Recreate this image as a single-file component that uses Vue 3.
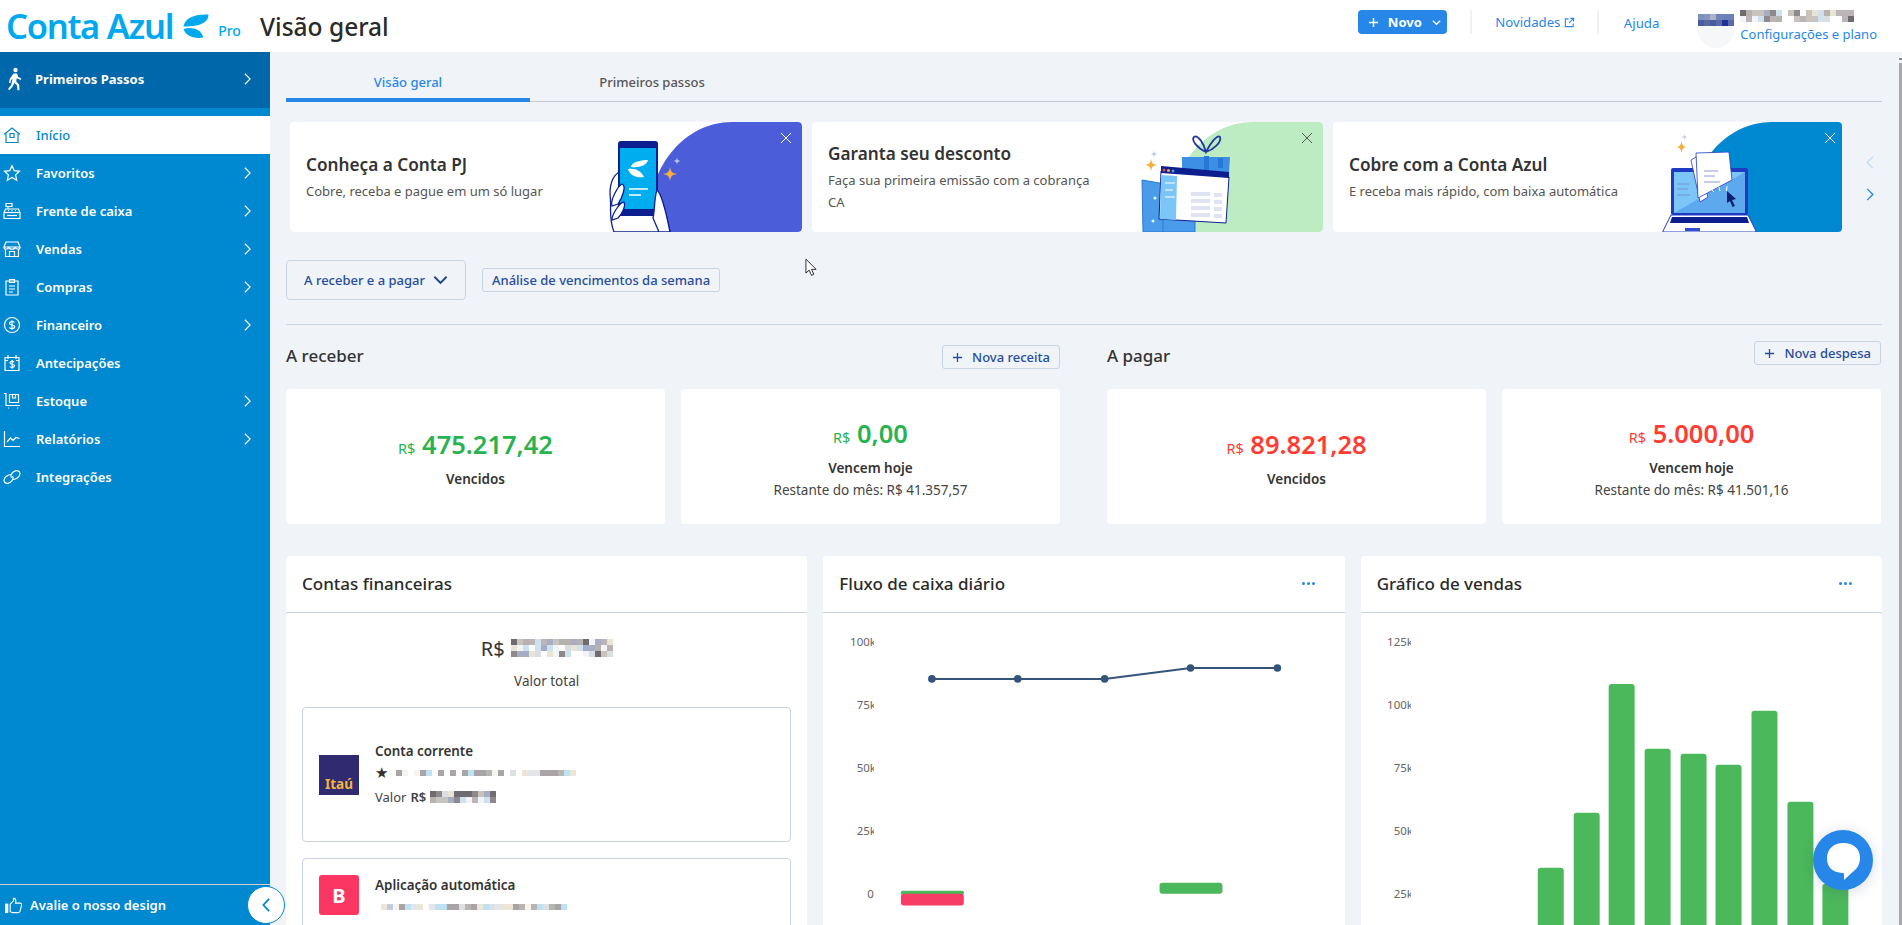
<template>
  <div class="app">
    <header class="topbar">
      <div class="brand">
        <span class="brand-name">Conta Azul</span>
        <svg class="brand-mark" viewBox="0 0 25 25">
          <path d="M0 12.5C1 5 9 0 25 .5 25 8 18 12.5 0 12.5Z" />
          <path d="M0 15C9 12.5 17 15 20 23.5 10 25 2 22 0 15Z" />
        </svg>
        <span class="brand-plan">Pro</span>
      </div>
      <h1 class="page-title">Visão geral</h1>

      <div class="top-actions">
        <button class="new-btn">
          <svg viewBox="0 0 12 12" class="new-plus"><path d="M6 1v10M1 6h10" /></svg>
          Novo
          <svg viewBox="0 0 12 12" class="new-caret"><path d="M2 4l4 4 4-4" /></svg>
        </button>
        <span class="top-sep first"></span>
        <a class="top-link">Novidades
          <svg viewBox="0 0 12 12" class="ext-icon"><path d="M5 2H1.5v8.5H10V7M7 1.5h3.5V5M10.5 1.5l-5 5" /></svg>
        </a>
        <span class="top-sep"></span>
        <a class="top-link help">Ajuda</a>
        <div class="avatar">
          <span class="mosaic" :style="gridStyle(6, 6)">
            <i v-for="(c, i) in avatarCells" :key="i" :style="{ background: c }"></i>
          </span>
        </div>
        <div class="account">
          <div class="account-name">
            <span class="mosaic" :style="gridStyle(7, 6)">
              <i v-for="(c, i) in nameA" :key="i" :style="{ background: c }"></i>
            </span>
            <span class="mosaic" :style="gridStyle(11, 6)">
              <i v-for="(c, i) in nameB" :key="i" :style="{ background: c }"></i>
            </span>
          </div>
          <a class="account-link">Configurações e plano</a>
        </div>
      </div>
    </header>

    <div class="shell">
      <aside class="sidebar">
        <div class="first-steps">
          <svg viewBox="0 0 16 24" class="walker">
            <circle cx="8.5" cy="3" r="2.2" />
            <path d="M6.5 6.5h3.5l1.3 3.5 3 1.5-.7 1.5-3.8-1.7-.6 3 3 3.5.3 5.500h-2l-.5-4.800-2.600-2.500-1.400 3-3.500 4.300-1.500-1.200 3.200-4.200 1.300-5.800-1.500.9-.5 3H2l.8-4.300Z" />
          </svg>
          <span>Primeiros Passos</span>
          <svg viewBox="0 0 10 16" class="chev"><path d="M2 2l6 6-6 6" /></svg>
        </div>

        <nav class="nav">
          <a v-for="item in navItems" :key="item.label" class="nav-item" :class="{ active: item.active }">
            <svg viewBox="0 0 18 18" class="nav-icon">
              <path v-for="(d, i) in item.icon" :key="i" :d="d" />
            </svg>
            <span class="nav-label">{{ item.label }}</span>
            <svg v-if="item.more" viewBox="0 0 10 16" class="chev"><path d="M2 2l6 6-6 6" /></svg>
          </a>
        </nav>

        <div class="side-footer">
          <svg viewBox="0 0 18 18" class="thumb">
            <path class="thumb-fill" d="M0 7h3.5v10H0Z" />
            <path d="M5.5 7.5 9 4V1.5c2-.5 3 1.5 2.2 5H16c1.2 0 1.8 1 1.5 2l-1.5 6.5c-.3 1-1 1.5-2 1.5H8c-1 0-1.8-.4-2.5-1Z" />
          </svg>
          <span>Avalie o nosso design</span>
        </div>
        <button class="collapse-btn">
          <svg viewBox="0 0 12 18"><path d="M9 2 2.5 9 9 16" /></svg>
        </button>
      </aside>

      <main class="main">
        <div class="tabs">
          <a class="tab active">Visão geral</a>
          <a class="tab">Primeiros passos</a>
        </div>

        <section class="promo-row">
          <article class="promo">
            <div class="promo-text">
              <h3>Conheça a Conta PJ</h3>
              <p>Cobre, receba e pague em um só lugar</p>
            </div>
            <svg class="promo-art" viewBox="0 0 250 110">
              <path fill="#4b5dd8" d="M100 110C88 60 125 0 180 0H246a4 4 0 0 1 4 4V106a4 4 0 0 1-4 4Z" />
              <path fill="#fff" stroke="#0d1f8f" stroke-width="1.3" d="M62 110C56 95 60 85 58 72 58 60 62 52 68 50L106 90 104 68C110 72 115 95 118 110Z" />
              <rect x="66" y="19" width="40" height="75" rx="3" fill="#0d1f8f" />
              <rect x="68" y="26" width="36" height="61" fill="#00aeef" />
              <path fill="#fff" d="M79 45C80 40 88 38 96 38 95 43 88 46 79 45ZM76 47C84 46 89 49 92 55 85 56 78 54 76 47Z" />
              <path stroke="#fff" stroke-width="1.3" d="M77 67H96M77 73H89" />
              <path fill="#fff" stroke="#0d1f8f" stroke-width="1.3" d="M101 96C103 88 102 76 105 68 110 72 115 95 118 110H107Z" />
              <path fill="#fff" stroke="#0d1f8f" stroke-width="1.3" d="M60 84C58 78 66 64 70 62 75 64 70 76 66 82ZM60 98C60 92 68 80 72 80 74 84 70 92 66 96Z" />
              <path fill="#f6ae3f" d="M118 45C119 50 120 51 125 52 120 53 119 54 118 59 117 54 116 53 111 52 116 51 117 50 118 45Z" />
              <path fill="#b9c6ef" d="M125 35.5C125.5 38 126 38.5 128.5 39 126 39.5 125.5 40 125 42.5 124.5 40 124 39.5 121.5 39 124 38.5 124.5 38 125 35.5Z" />
              <path stroke="#fff" stroke-width="1" d="M229 11 239 21M239 11 229 21" />
            </svg>
          </article>

          <article class="promo">
            <div class="promo-text">
              <h3>Garanta seu desconto</h3>
              <p>Faça sua primeira emissão com a cobrança CA</p>
            </div>
            <svg class="promo-art" viewBox="0 0 250 110">
              <path fill="#bdecc2" d="M100 110C88 60 125 0 180 0H246a4 4 0 0 1 4 4V106a4 4 0 0 1-4 4Z" />
              <path fill="#3d8fe6" d="M109 35H157L154 80H109Z" />
              <path fill="#2678d8" d="M131 34h5v16h-5ZM145 36h5v10h-5Z" />
              <path fill="none" stroke="#24399e" stroke-width="1.8" d="M133 30C124 26 118 18 121 15 125 12 131 22 133 30 137 22 144 12 147 15 149 20 140 28 133 30Z" />
              <path fill="#4a9cea" stroke="#2678d8" d="M69 58 92 62V110H70Z" />
              <path fill="#4a9cea" stroke="#2678d8" d="M90 75H122V110H90Z" />
              <circle cx="82" cy="76" r="1.5" fill="#dff" />
              <circle cx="80" cy="99" r="1.5" fill="#dff" />
              <circle cx="110" cy="97" r="1.5" fill="#dff" />
              <path fill="#fff" stroke="#0d1f8f" d="M88 49 156 55 153 101 86 97Z" />
              <path fill="#0d1f8f" d="M88 44 156 50V56L88 51Z" />
              <path fill="#7cc6f7" d="M88 53 104 54 103 98 87 97Z" />
              <path fill="#dfe3f2" d="M118 70H137V74H118ZM118 77H137V81H118ZM118 84H137V88H118ZM118 91H137V95H118ZM141 71H149V75H141ZM141 78H149V82H141ZM141 85H149V89H141ZM141 92H149V96H141Z" />
              <path stroke="#fff" stroke-width="1" d="M92 61H102M92 68H100M92 75H102" />
              <circle cx="91" cy="48" r="1.5" fill="#e84a3c" />
              <circle cx="95.5" cy="48.5" r="1.5" fill="#f6ae3f" />
              <circle cx="100" cy="49" r="1.5" fill="#4a9cea" />
              <path fill="#f6ae3f" d="M78 37C78.8 41 79.5 42 83.5 43 79.5 44 78.8 45 78 49 77.2 45 76.5 44 72.5 43 76.5 42 77.2 41 78 37Z" />
              <path fill="#bcc6e8" d="M81 28.5C81.3 31 81.8 31.5 84 32 81.8 32.5 81.3 33 81 35.5 80.7 33 80.2 32.5 78 32 80.2 31.5 80.7 31 81 28.5Z" />
              <path stroke="#5a5a5a" stroke-width="1" d="M229 11 239 21M239 11 229 21" />
            </svg>
          </article>

          <article class="promo">
            <div class="promo-text">
              <h3>Cobre com a Conta Azul</h3>
              <p>E receba mais rápido, com baixa automática</p>
            </div>
            <svg class="promo-art" viewBox="0 0 250 110">
              <path fill="#0088d0" d="M100 110C88 60 125 0 180 0H250V110Z" />
              <rect x="79" y="46" width="77" height="47" rx="2" fill="#1f3bc4" />
              <rect x="82" y="50" width="71" height="41" fill="#7cc6f7" />
              <path fill="#5ea8ee" d="M153 50V91H82Z" />
              <path fill="#fff" stroke="#1f3bc4" stroke-width=".8" d="M99 38 104 35 116 75 108 80Z" />
              <path fill="#fff" stroke="#1f3bc4" stroke-width=".8" d="M104 31 137 30 140 58 106 76Z" />
              <path stroke="#8c9ad8" stroke-width="1" d="M112 49H126M112 54H123M112 60H128" />
              <path stroke="#7b8fd6" stroke-width="1" d="M85 62H97M85 67H96M85 73H98" />
              <path stroke="#fff" stroke-width="1" d="M127 65 128 69M135 64 134.5 69M119 67 122 70" />
              <path fill="#0d1f6f" d="M135 69 144 77 140 78 143 84 140.5 85 138 79 135 81Z" />
              <path fill="#fff" stroke="#1f3bc4" d="M79 93H156L164 109V110H71V109Z" />
              <path fill="#0d1f8f" d="M80 95H155L157 101H78Z" />
              <path fill="#1f3bc4" d="M93 106H108V109H93Z" opacity=".9" />
              <path fill="#f6ae3f" d="M89.5 19C90.3 23 90.8 24 94 25 90.8 26 90.3 27 89.5 31 88.7 27 88.2 26 85 25 88.2 24 88.7 23 89.5 19Z" />
              <path fill="#c3cbec" d="M92.5 12C92.8 14 93.2 14.5 95 15 93.2 15.5 92.8 16 92.5 18 92.2 16 91.8 15.5 90 15 91.8 14.5 92.2 14 92.5 12Z" />
              <path stroke="#fff" stroke-width="1" d="M233 11 243 21M243 11 233 21" />
            </svg>
          </article>

          <div class="promo-arrows">
            <svg viewBox="0 0 10 16" class="arrow off"><path d="M8 2 2 8l6 6" /></svg>
            <svg viewBox="0 0 10 16" class="arrow"><path d="M2 2l6 6-6 6" /></svg>
          </div>
        </section>

        <div class="filter-row">
          <button class="select-btn">
            A receber e a pagar
            <svg viewBox="0 0 16 10"><path d="M1.5 1.5 8 8l6.5-6.5" /></svg>
          </button>
          <button class="tag-btn">Análise de vencimentos da semana</button>
        </div>

        <div class="split">
          <section v-for="group in moneyGroups" :key="group.title" class="money" :class="group.tone">
            <div class="money-head">
              <h2>{{ group.title }}</h2>
              <button class="add-btn">
                <svg viewBox="0 0 12 12"><path d="M6 1v10M1 6h10" /></svg>
                {{ group.action }}
              </button>
            </div>
            <div class="money-cards">
              <div v-for="card in group.cards" :key="card.label" class="money-card">
                <div class="amount"><small>R$</small> {{ card.value }}</div>
                <div class="amount-label">{{ card.label }}</div>
                <div v-if="card.rest" class="amount-rest">Restante do mês: R$ {{ card.rest }}</div>
              </div>
            </div>
          </section>
        </div>

        <div class="panels">
          <section class="panel">
            <div class="panel-head"><h3>Contas financeiras</h3></div>
            <div class="accounts-body">
              <div class="total">
                <span>R$</span>
                <span class="mosaic" :style="gridStyle(17, 6)">
                  <i v-for="(c, i) in totalCells" :key="i" :style="{ background: c }"></i>
                </span>
              </div>
              <div class="total-label">Valor total</div>

              <div class="bank-box">
                <div class="bank-logo itau">Itaú</div>
                <div class="bank-info">
                  <div class="bank-name">Conta corrente</div>
                  <div class="bank-line">
                    <span class="bank-star">★</span>
                    <span class="mosaic" :style="gridStyle(30, 6)">
                      <i v-for="(c, i) in lineA" :key="i" :style="{ background: c }"></i>
                    </span>
                  </div>
                  <div class="bank-value">
                    Valor <b>R$</b>
                    <span class="mosaic" :style="gridStyle(11, 6)">
                      <i v-for="(c, i) in valueCells" :key="i" :style="{ background: c }"></i>
                    </span>
                  </div>
                </div>
              </div>

              <div class="bank-box second">
                <div class="bank-logo inter">B</div>
                <div class="bank-info">
                  <div class="bank-name">Aplicação automática</div>
                  <div class="bank-line">
                    <span class="mosaic" :style="gridStyle(32, 6)">
                      <i v-for="(c, i) in lineB" :key="i" :style="{ background: c }"></i>
                    </span>
                  </div>
                </div>
              </div>
            </div>
          </section>

          <section class="panel">
            <div class="panel-head">
              <h3>Fluxo de caixa diário</h3>
              <span class="dots"><i></i><i></i><i></i></span>
            </div>
            <svg class="chart" viewBox="0 0 522 312">
              <defs>
                <clipPath id="flow-axis"><rect x="0" y="0" width="51" height="312" /></clipPath>
              </defs>
              <g clip-path="url(#flow-axis)" class="axis">
                <text v-for="t in flowTicks" :key="t.label" :x="t.x" :y="t.y">{{ t.label }}</text>
              </g>
              <polyline :points="flowLine" fill="none" stroke="#34547a" stroke-width="2" />
              <circle v-for="p in flowPoints" :key="p[0]" :cx="p[0]" :cy="p[1]" r="3.8" fill="#34547a" />
              <rect x="78" y="277" width="63" height="4" rx="1.5" fill="#4bb85c" />
              <rect x="78" y="280" width="63" height="12" rx="3" fill="#f73d65" />
              <rect x="337" y="269" width="63" height="11" rx="3" fill="#4bb85c" />
            </svg>
          </section>

          <section class="panel">
            <div class="panel-head">
              <h3>Gráfico de vendas</h3>
              <span class="dots"><i></i><i></i><i></i></span>
            </div>
            <svg class="chart" viewBox="0 0 522 312">
              <defs>
                <clipPath id="sales-axis"><rect x="0" y="0" width="50" height="312" /></clipPath>
              </defs>
              <g clip-path="url(#sales-axis)" class="axis">
                <text v-for="t in salesTicks" :key="t.label" x="52" :y="t.y">{{ t.label }}</text>
              </g>
              <rect v-for="b in salesBars" :key="b[0]" :x="b[0]" :y="b[1]" width="26" :height="330 - b[1]" rx="3" fill="#4bb85c" />
            </svg>
          </section>
        </div>
      </main>

      <div class="scroll-track">
        <span class="scroll-arrow"></span>
        <span class="scroll-thumb"></span>
      </div>
    </div>

    <svg class="mouse" viewBox="0 0 14 20">
      <path d="M1 1V16L4.5 12.8 7 18.5 9.5 17.3 7 12H12Z" fill="#fff" stroke="#222" stroke-width="1" />
    </svg>

    <button class="chat-btn">
      <svg viewBox="0 0 36 40">
        <path d="M18 1C8 1 1 7 1 17 1 26 7 31 15 31.5L18.5 32V39L27 31C32 28 35 23 35 16 35 7 28 1 18 1Z" fill="#fff" />
      </svg>
    </button>
  </div>
</template>

<script setup>
const navItems = [
  { label: 'Início', active: true, icon: ['M1 8.5 9 2l8 6.5', 'M3 7.5V16.5H15V7.5', 'M7 7.5H11V11.5H7Z'] },
  { label: 'Favoritos', more: true, icon: ['M9 1.8 11.2 6.6 16.5 7.3 12.6 10.9 13.7 16.2 9 13.5 4.3 16.2 5.4 10.9 1.5 7.3 6.8 6.6Z'] },
  { label: 'Frente de caixa', more: true, icon: ['M3 1.5H9V4.5H3Z', 'M2.5 7H15.5L17 10.5V16.5H1V10.5Z', 'M1 10.5H17', 'M5 4.5V7', 'M5 8.7H6M8.5 8.7H9.5M12 8.7H13', 'M4 13.5H14'] },
  { label: 'Vendas', more: true, icon: ['M3 2H15L17 7H1Z', 'M1 7C1 10 5 10 5.7 7 6.4 10 11.6 10 12.3 7 13 10 17 10 17 7', 'M2.5 9.5V16.5H15.5V9.5', 'M6.5 16.5V11.5H11.5V16.5'] },
  { label: 'Compras', more: true, icon: ['M3 3H15V17H3Z', 'M6.5 1.5H11.5V4.5H6.5Z', 'M6 8H12M6 11H12M6 14H10'] },
  { label: 'Financeiro', more: true, icon: ['M9 1.5A7.5 7.5 0 1 0 9 16.5 7.5 7.5 0 0 0 9 1.5Z', 'M11.5 6.5C10.5 5 6.5 5.2 6.5 7.3 6.5 9.8 11.7 8.3 11.7 10.8 11.7 13 7.5 13 6.3 11.5', 'M9 4.3V13.7'] },
  { label: 'Antecipações', icon: ['M2 3.5H16V16.5H2Z', 'M5 1V5M13 1V5', 'M2 6.5H5M13 6.5H16', 'M11.3 8C10.5 7 7 7 7 8.8 7 10.7 11.5 9.8 11.5 11.8 11.5 13.7 7.7 13.7 6.8 12.5', 'M9.2 6V14.8'] },
  { label: 'Estoque', more: true, icon: ['M1 1.5H3V13.5H17', 'M6.5 2.5H15.5V10.5H6.5Z', 'M9.5 2.5V6H12.5V2.5', 'M5.5 15.5V16.5M14.5 15.5V16.5'] },
  { label: 'Relatórios', more: true, icon: ['M1.5 1V16.5H17', 'M4 12 7.5 8 10 10.5 13 7.5 16.5 8.5'] },
  { label: 'Integrações', icon: ['M8 6.5C5 6.5 1 9 1 12.5 1 15.5 4.5 16 7 14.5 9.5 13 11 10 9.5 8', 'M10 11.5C13 11.5 17 9 17 5.5 17 2.5 13.5 2 11 3.5 8.5 5 7 8 8.5 10'] },
]

const moneyGroups = [
  {
    title: 'A receber',
    action: 'Nova receita',
    tone: 'income',
    cards: [
      { value: '475.217,42', label: 'Vencidos' },
      { value: '0,00', label: 'Vencem hoje', rest: '41.357,57' },
    ],
  },
  {
    title: 'A pagar',
    action: 'Nova despesa',
    tone: 'expense',
    cards: [
      { value: '89.821,28', label: 'Vencidos' },
      { value: '5.000,00', label: 'Vencem hoje', rest: '41.501,16' },
    ],
  },
]

const flowTicks = [
  { label: '100k', x: 53, y: 32 },
  { label: '75k', x: 53, y: 95 },
  { label: '50k', x: 53, y: 158 },
  { label: '25k', x: 53, y: 221 },
  { label: '0', x: 51, y: 284 },
]
const flowPoints = [[109, 65], [195, 65], [282, 65], [368, 54], [455, 54]]
const flowLine = flowPoints.map((p) => p.join(',')).join(' ')

const salesTicks = [
  { label: '125k', y: 32 },
  { label: '100k', y: 95 },
  { label: '75k', y: 158 },
  { label: '50k', y: 221 },
  { label: '25k', y: 284 },
]
const salesBars = [
  [177, 254], [213, 199], [248, 70], [284, 135], [320, 140],
  [355, 151], [391, 97], [427, 188], [462, 270],
]

// blurred out values: fixed pseudo random blocks so the picture stays stable
const greys = ['#b7b2ae', '#8e8a8c', '#d9dde4', '#f2f4f7', '#c9c3bd', '#ffffff', '#a7adc4', '#e9e4d4', '#6f6b70', '#bbb5b8', '#cfe0ee']
const soft = ['#e3e5ea', '#f5f5ef', '#b9b5b2', '#ffffff', '#c3cbe0', '#ece6d6', '#a9a5a6', '#dcdfe3', '#bfe2f2', '#a9a5a6']

const blocks = (count, seed, palette) => {
  const out = []
  let n = seed
  for (let i = 0; i < count; i++) {
    n = (n * 137 + 71) % 1009
    out.push(palette[n % palette.length])
  }
  return out
}

const gridStyle = (cols, size) => ({
  gridTemplateColumns: `repeat(${cols}, ${size}px)`,
  gridAutoRows: `${size}px`,
})

const avatarCells = [
  '#7f8fc0', '#8793c0', '#a9b1cf', '#6f83b8', '#6b80b8', '#6b80b8',
  '#4a5c9e', '#59699f', '#4a5c9e', '#5b6aa5', '#23319a', '#5a6aa8',
]
const nameA = blocks(14, 17, greys)
const nameB = blocks(22, 43, greys)
const totalCells = blocks(51, 29, greys)
const lineA = blocks(30, 61, soft)
const lineB = blocks(32, 97, soft)
const valueCells = blocks(22, 11, greys)
</script>

<style>
html,
body {
  margin: 0;
  overflow: hidden;
}
</style>

<style scoped>
* {
  box-sizing: border-box;
}

.app {
  position: relative;
  display: flex;
  flex-direction: column;
  height: 925px;
  overflow: hidden;
  background: #f0f3f8;
  font-family: "Noto Sans", "Liberation Sans", sans-serif;
  color: #333;
}

button {
  font-family: inherit;
  cursor: pointer;
}

h1,
h2,
h3,
p {
  margin: 0;
}

.mosaic {
  display: inline-grid;
}

.mosaic i {
  display: block;
}

/* top bar */
.topbar {
  display: flex;
  align-items: center;
  height: 52px;
  flex-shrink: 0;
  background: #fff;
  padding-left: 6px;
}

.brand {
  display: flex;
  align-items: center;
  width: 254px;
  color: #00a9ee;
}

.brand-name {
  font-size: 34.5px;
  font-weight: 600;
  letter-spacing: -1.3px;
  line-height: 1;
}

.brand-mark {
  width: 26px;
  height: 25px;
  margin-left: 10px;
  fill: #00a9ee;
}

.brand-plan {
  font-size: 14px;
  font-weight: 500;
  margin: 8px 0 0 9px;
}

.page-title {
  font-size: 24.5px;
  font-weight: 500;
  color: #2a2a2a;
}

.top-actions {
  display: flex;
  align-items: center;
  margin-left: auto;
  padding-right: 25px;
}

.new-btn {
  display: flex;
  align-items: center;
  width: 89px;
  height: 24px;
  margin-bottom: 8px;
  padding: 0 0 0 10px;
  border: 0;
  border-radius: 4px;
  background: #2687e9;
  color: #fff;
  font-size: 13px;
  font-weight: 700;
}

.new-plus {
  width: 11px;
  height: 11px;
  margin-right: 9px;
  fill: none;
  stroke: #fff;
  stroke-width: 1.6;
}

.new-caret {
  width: 11px;
  height: 11px;
  margin-left: 9px;
  fill: none;
  stroke: #fff;
  stroke-width: 1.5;
}

.top-sep {
  width: 2px;
  height: 24px;
  margin: 0 24.8px 8px 21.6px;
  background: #eef1f5;
}

.top-sep.first {
  margin: 0 23.6px 8px 22.8px;
}

.top-link,
.account-link {
  color: #2687e9;
  font-size: 13px;
  white-space: nowrap;
}

.top-link {
  display: flex;
  align-items: center;
  margin-bottom: 8px;
  font-size: 13.2px;
}

.ext-icon {
  width: 11px;
  height: 11px;
  margin-left: 4px;
  fill: none;
  stroke: #2687e9;
  stroke-width: 1.2;
}

.help {
  margin-right: 39px;
  margin-bottom: 6px;
}

.avatar {
  display: flex;
  align-items: flex-start;
  width: 36px;
  height: 36px;
  padding-top: 2px;
  margin-right: 6px;
  margin-top: 8px;
  background: #f6f7f9;
  border-radius: 50%;
}

.account {
  display: flex;
  flex-direction: column;
}

.account-name {
  display: flex;
  align-items: flex-start;
  gap: 6px;
  height: 12px;
  margin-bottom: 3px;
}

/* sidebar */
.shell {
  position: relative;
  display: flex;
  flex: 1;
  min-height: 0;
}

.sidebar {
  position: relative;
  display: flex;
  flex-direction: column;
  width: 270px;
  flex-shrink: 0;
  background: #0088d0;
  color: #fff;
  z-index: 2;
}

.first-steps {
  display: flex;
  align-items: center;
  height: 56px;
  padding: 0 0 2px 7px;
  background: #0067ab;
  font-size: 13px;
  font-weight: 700;
}

.walker {
  width: 16px;
  height: 24px;
  margin-right: 12px;
  fill: #fff;
}

.chev {
  width: 9px;
  height: 14px;
  margin-left: auto;
  margin-right: 18px;
  fill: none;
  stroke: #fff;
  stroke-width: 1.3;
}

.nav {
  margin-top: 8px;
}

.nav-item {
  display: flex;
  align-items: center;
  height: 38px;
  padding-left: 3px;
  font-size: 13px;
  font-weight: 600;
}

.nav-icon {
  width: 18px;
  height: 18px;
  margin-right: 15px;
  fill: none;
  stroke: #fff;
  stroke-width: 1.2;
}

.nav-item.active {
  background: #fff;
  color: #0088d0;
  font-weight: 500;
}

.nav-item.active .nav-icon {
  stroke: #0088d0;
}

.side-footer {
  display: flex;
  align-items: center;
  margin-top: auto;
  height: 41px;
  padding-left: 5px;
  border-top: 1px solid #d0cfcf;
  font-size: 13px;
  font-weight: 600;
}

.thumb {
  width: 17px;
  height: 17px;
  margin-right: 8px;
  fill: none;
  stroke: #fff;
  stroke-width: 1.2;
}

.thumb-fill {
  fill: #fff;
  stroke: none;
}

/* sits over the edge of the sidebar */
.collapse-btn {
  position: absolute;
  left: 247px;
  bottom: 1px;
  display: flex;
  align-items: center;
  justify-content: center;
  width: 38px;
  height: 38px;
  padding: 0;
  border: 1.5px solid #0088d0;
  border-radius: 50%;
  background: #fff;
}

.collapse-btn svg {
  width: 11px;
  height: 16px;
  fill: none;
  stroke: #0088d0;
  stroke-width: 2;
}

/* main column */
.main {
  flex: 1;
  min-width: 0;
  overflow: hidden;
  padding: 0 17px 0 16px;
}

.tabs {
  display: flex;
  height: 50px;
  border-bottom: 1px solid #c6cad0;
}

.tab {
  display: flex;
  align-items: center;
  justify-content: center;
  width: 244px;
  height: 50px;
  padding-top: 10px;
  font-size: 13px;
  font-weight: 500;
  color: #555;
}

.tab.active {
  padding-top: 14px;
  color: #2687e9;
  border-bottom: 4px solid #2687e9;
}

.promo-row {
  display: grid;
  grid-template-columns: 512px 511px 509px 1fr;
  gap: 10px;
  height: 110px;
  margin-top: 20px;
  padding-left: 4px;
}

.promo {
  position: relative;
  display: flex;
  align-items: center;
  padding-left: 16px;
  background: #fff;
  border-radius: 4px;
  overflow: hidden;
}

.promo-text {
  width: 270px;
}

.promo-text h3 {
  font-size: 17.2px;
  font-weight: 600;
  line-height: 26px;
  color: #333;
}

.promo-text p {
  font-size: 13px;
  line-height: 22px;
  color: #555;
  margin-top: 2px;
}

.promo-art {
  position: absolute;
  right: 0;
  top: 0;
  width: 250px;
  height: 110px;
}

.promo-arrows {
  display: flex;
  flex-direction: column;
  align-items: center;
  gap: 17px;
  padding: 33px 0 0 6px;
}

.arrow {
  width: 10px;
  height: 15px;
  fill: none;
  stroke: #2687e9;
  stroke-width: 1.5;
}

.arrow.off {
  stroke: #bcdcfa;
}

.filter-row {
  display: flex;
  align-items: center;
  gap: 16px;
  margin-top: 28px;
  height: 40px;
}

.select-btn {
  display: flex;
  align-items: center;
  justify-content: space-between;
  width: 180px;
  height: 40px;
  padding: 0 17px;
  border: 1px solid #c8d3e4;
  border-radius: 4px;
  background: #f0f3f8;
  color: #264d9b;
  font-size: 13px;
  font-weight: 500;
}

.select-btn svg {
  width: 15px;
  height: 10px;
  fill: none;
  stroke: #1c4389;
  stroke-width: 2;
}

.tag-btn {
  height: 24px;
  padding: 0 9px;
  border: 1px solid #c8d3e4;
  border-radius: 3px;
  background: #f0f3f8;
  color: #264d9b;
  font-size: 13px;
  font-weight: 500;
}

.split {
  display: grid;
  grid-template-columns: 774px 774px;
  gap: 47px;
  margin-top: 24px;
  border-top: 1px solid #c8d3e4;
}

.money-head {
  display: flex;
  align-items: center;
  justify-content: space-between;
  height: 64px;
}

.money-head h2 {
  margin-top: -3px;
  font-size: 17px;
  font-weight: 500;
  color: #333;
}

.add-btn {
  display: flex;
  align-items: center;
  height: 24px;
  padding: 0 9px;
  border: 1px solid #c8d3e4;
  border-radius: 3px;
  background: #f0f3f8;
  color: #264d9b;
  font-size: 13px;
  font-weight: 500;
}

.add-btn svg {
  width: 11px;
  height: 11px;
  margin-right: 9px;
  fill: none;
  stroke: #264d9b;
  stroke-width: 1.4;
}

.expense .add-btn {
  margin-top: -8px;
}

.money-cards {
  display: grid;
  grid-template-columns: 1fr 1fr;
  gap: 16px;
}

.money-card {
  display: flex;
  flex-direction: column;
  align-items: center;
  justify-content: center;
  height: 135px;
  padding-top: 4px;
  background: #fff;
  border-radius: 4px;
}

.amount {
  font-size: 25.5px;
  font-weight: 600;
  line-height: 32px;
}

.amount small {
  font-size: 14.5px;
  font-weight: 400;
}

.income .amount {
  color: #27b34f;
}

.expense .amount {
  color: #ff3d32;
}

.amount-label {
  font-size: 13.5px;
  font-weight: 600;
  line-height: 20px;
  margin-top: 5px;
  color: #333;
}

.amount-rest {
  font-size: 13.5px;
  line-height: 20px;
  margin-top: 2px;
  color: #444;
}

.panels {
  display: grid;
  grid-template-columns: repeat(3, 1fr);
  gap: 16px;
  margin-top: 32px;
}

.panel {
  height: 400px;
  background: #fff;
  border-radius: 4px;
}

.panel-head {
  display: flex;
  align-items: center;
  justify-content: space-between;
  height: 57px;
  padding: 0 30px 2px 16px;
  border-bottom: 1px solid #c8d3e4;
}

.panel-head h3 {
  font-size: 17px;
  font-weight: 500;
  color: #2a2a2a;
}

.dots {
  display: flex;
  gap: 2px;
}

.dots i {
  width: 3px;
  height: 3px;
  border-radius: 50%;
  background: #2687e9;
}

.accounts-body {
  padding: 24px 16px 0;
}

.total {
  display: flex;
  align-items: center;
  justify-content: center;
  gap: 6px;
  height: 22px;
  font-size: 20px;
  color: #333;
}

.total-label {
  margin-top: 11.6px;
  font-size: 13.5px;
  line-height: 20px;
  text-align: center;
  color: #444;
}

.bank-box {
  display: flex;
  align-items: center;
  gap: 16px;
  height: 135px;
  margin-top: 16.8px;
  padding: 0 16px;
  border: 1px solid #c8d3e4;
  border-radius: 4px;
}

.bank-box.second {
  margin-top: 16px;
  align-items: flex-start;
  padding-top: 16px;
}

.bank-logo {
  display: flex;
  align-items: flex-end;
  justify-content: center;
  flex-shrink: 0;
  width: 40px;
  height: 40px;
}

.itau {
  background: #302a70;
  color: #f6b53f;
  font-size: 13.5px;
  font-weight: 700;
  padding-bottom: 2px;
}

.inter {
  align-items: center;
  background: #fb3663;
  color: #fff;
  font-size: 20px;
  font-weight: 700;
  border-radius: 3px;
}

.bank-name {
  font-size: 13.4px;
  font-weight: 600;
  line-height: 20px;
  color: #333;
}

.bank-line {
  display: flex;
  align-items: center;
  gap: 8px;
  height: 24px;
}

.bank-star {
  font-size: 15px;
  line-height: 1;
  color: #333;
}

.bank-value {
  display: flex;
  align-items: center;
  gap: 4px;
  height: 24px;
  font-size: 13px;
  color: #444;
}

.bank-value b {
  font-weight: 600;
}

.chart {
  display: block;
  width: 100%;
  margin-top: 1px;
}

.axis text {
  font-size: 11.5px;
  text-anchor: end;
  fill: #666;
}

/* thin scrollbar at the window edge */
.scroll-track {
  position: relative;
  width: 3px;
  flex-shrink: 0;
  background: #f0f3f8;
}

.scroll-thumb {
  position: absolute;
  left: 0;
  top: 11px;
  bottom: 0;
  width: 3px;
  background: #a8a8a8;
}

.scroll-arrow {
  position: absolute;
  left: 0;
  top: 6px;
  width: 3px;
  height: 2px;
  background: #888;
}

.mouse {
  position: absolute;
  left: 805px;
  top: 258px;
  width: 13px;
  height: 19px;
}

.chat-btn {
  position: absolute;
  right: 29px;
  bottom: 35px;
  display: flex;
  align-items: center;
  justify-content: center;
  width: 60px;
  height: 60px;
  padding: 0;
  border: 0;
  border-radius: 50%;
  background: #2687e9;
  box-shadow: 0 2px 14px rgba(30, 50, 90, 0.18);
  z-index: 3;
}

.chat-btn svg {
  width: 35px;
  height: 39px;
  margin-top: 2px;
}
</style>
